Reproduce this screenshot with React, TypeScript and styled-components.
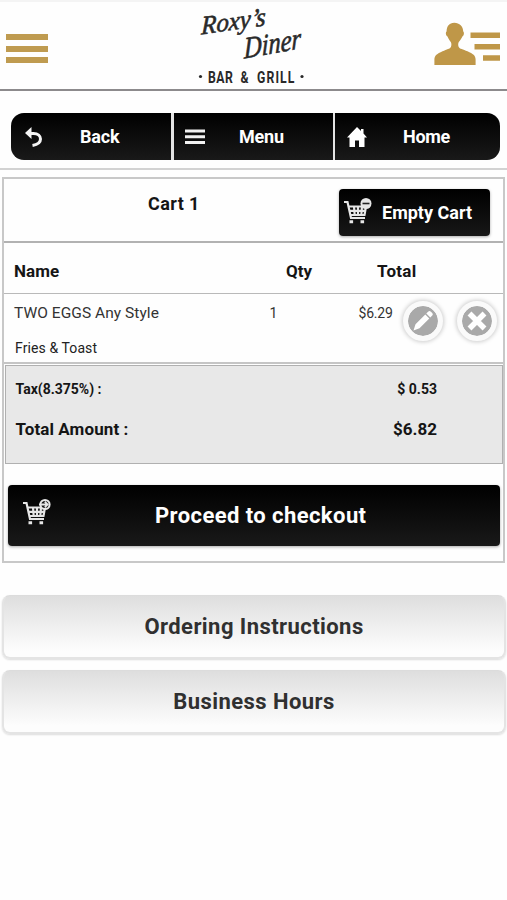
import React from "react";
import styled, { createGlobalStyle } from "styled-components";

const Global = createGlobalStyle`
  *, *::before, *::after { box-sizing: border-box; }
  html, body { margin: 0; background: #fefefe; }
  body { font-family: Roboto, "Liberation Sans", sans-serif; color: #151515; }
  button { font: inherit; color: inherit; border: 0; padding: 0; margin: 0; background: none; cursor: pointer; text-align: left; }
  svg { display: block; flex: none; overflow: visible; }
`;

const Page = styled.div`
  width: 507px;
  height: 900px;
  overflow: hidden;
  background: #fefefe;
`;

const Header = styled.header`
  height: 91px;
  display: flex;
  border-top: 2px solid #f4f4f4;
  border-bottom: 2px solid #8c8a8c;
  padding: 0 7px 0 6px;
`;

const MenuButton = styled.button`
  width: 42px;
  height: 29px;
  margin-top: 32px;
  display: flex;
  flex-direction: column;
  justify-content: space-between;
`;

const Bar = styled.span`
  height: 6px;
  background: #bf9b50;
`;

const LogoBox = styled.div`
  width: 112px;
  margin: 0 auto 0 149px;
`;

const AccountButton = styled.button`
  width: 66px;
  margin-top: 20px;
  height: 44px;
`;

const Nav = styled.nav`
  display: grid;
  grid-template-columns: 160px 159px 165px;
  gap: 2.5px;
  height: 47px;
  margin: 22px 7px 0 11px;
  border-radius: 13px;
  overflow: hidden;
  background: #e4e4e4;
  width: 489px;
`;

const NavItem = styled.button<{ $icon: number; $gap: number }>`
  display: flex;
  align-items: center;
  padding-left: ${(p) => p.$icon}px;
  gap: ${(p) => p.$gap}px;
  background: linear-gradient(#000, #0a0a0a 40%, #191919);
  color: #fff;
`;

const Text = styled.span<{ $size: number; $weight?: number; $track?: number; $color?: string }>`
  display: block;
  white-space: nowrap;
  font-size: ${(p) => p.$size}px;
  line-height: 24px;
  font-weight: ${(p) => p.$weight ?? 700};
  letter-spacing: ${(p) => p.$track ?? 0}px;
  color: ${(p) => p.$color ?? "inherit"};
`;

const Divider = styled.hr`
  border: 0;
  height: 2px;
  margin: 8px 0 7px;
  background: #d2d2d2;
`;

const Cart = styled.section`
  width: 503px;
  height: 386px;
  margin-left: 2px;
  border: 2px solid #c8c8c8;
`;

const CartHeader = styled.div`
  display: flex;
  height: 64px;
  border-bottom: 2px solid #b2b2b2;
  padding: 12px 0 0 144px;
`;

const CartTitle = styled.div`
  width: 191px;
  padding-top: 1px;
`;

const EmptyCart = styled.button`
  display: flex;
  align-items: center;
  width: 151px;
  height: 47px;
  margin-top: -2px;
  padding-left: 5px;
  gap: 10px;
  border-radius: 4px;
  background: linear-gradient(#000, #171717);
  box-shadow: 0 1px 3px #aaa;
  color: #fff;

  svg { margin-top: -3px; }
`;

const HeadRow = styled.div`
  display: grid;
  grid-template-columns: 272px 91px 1fr;
  height: 51px;
  padding: 16px 0 0 10px;
  border-bottom: 1px solid #b9b9b9;
`;

const ItemRow = styled.div`
  display: grid;
  grid-template-columns: 255.5px 89px 41px 54px 1fr;
  height: 70px;
  padding: 7px 0 0 10px;
  border-bottom: 2px solid #c5c5c5;
`;

const ItemName = styled.div`
  display: grid;
  gap: 11px;
  align-content: start;
`;

const ItemOption = styled.div`
  padding-left: 1px;
`;

const RoundButton = styled.button`
  display: grid;
  place-items: center;
  width: 40px;
  height: 40px;
  margin: 0 0 0 3.5px;
  border-radius: 50%;
  background: #a9a9a9;
  background-clip: padding-box;
  border: 5px solid #fafafa;
  box-shadow: 0 0 4px 1px #ccc;
`;

const Totals = styled.div`
  height: 99px;
  margin: 1px 0 0 1px;
  width: 498px;
  padding: 11px 65px 0 9.5px;
  background: #e8e8e8;
  border: 1px solid #b0b0b0;
  display: grid;
  align-content: start;
  gap: 16px;
`;

const TotalLine = styled.div`
  display: flex;
  justify-content: space-between;
`;

const Checkout = styled.button`
  display: flex;
  align-items: center;
  width: 492px;
  height: 61px;
  margin: 21px 0 0 4px;
  padding: 0 0 0 15px;
  gap: 104px;
  border-radius: 4px;
  background: linear-gradient(#000, #191919);
  box-shadow: 0 1px 3px #aaa;
  color: #fff;

  svg { margin-top: -8px; }
`;

const Panels = styled.div`
  display: grid;
  gap: 11px;
  margin: 32px 1px 0 2px;
`;

const PanelButton = styled.button`
  display: flex;
  justify-content: center;
  align-items: center;
  height: 64px;
  border: 2px solid #e4e4e4;
  border-top: 1px solid #dcdcdc;
  border-radius: 8px;
  background: linear-gradient(#dedede, #fdfdfd 90%);
  box-shadow: 0 1px 2px #dcdcdc;
`;

const Logo = () => (
  <svg width="112" height="86" viewBox="197 2 112 86" fill="#292929">
    <g fontFamily="Liberation Serif, serif" fontStyle="italic" fontWeight="400" stroke="#292929" strokeWidth=".6">
      <text transform="translate(201 34.5) rotate(-8) skewX(-10)" fontSize="26" textLength="65" lengthAdjust="spacingAndGlyphs">Roxy’s</text>
      <text transform="translate(244 58.5) rotate(-10) skewX(-10)" fontSize="30" textLength="58" lengthAdjust="spacingAndGlyphs">Diner</text>
    </g>
    <g fontFamily="Roboto, sans-serif" fontWeight="700" fontSize="17">
      <text transform="translate(208 82.5) scale(.72 1)" textLength="34.5">BAR</text>
      <text transform="translate(240.5 82.5) scale(.72 1)">&amp;</text>
      <text transform="translate(257 82.5) scale(.72 1)" textLength="52">GRILL</text>
    </g>
    <circle cx="200.5" cy="76.5" r="1.6" />
    <circle cx="302" cy="76.5" r="1.6" />
  </svg>
);

const AccountIcon = () => (
  <svg width="66" height="44" viewBox="434 22 66 44" fill="#bf9748">
    <path d="M454.3 22.8c5.200 0 8.900 3.600 8.900 8.800 1.200.6.9 4.300-.8 5-1.200 2.500-2.600 4.200-3.600 5.500-.7 1.100-.8 3.200-.2 4.600 1 2.300 4.500 2.500 8.900 4.600 5.500 2.500 8.100 4.300 8.100 8.300v5.400h-41.200v-5.400c0-4 2.700-5.800 8.100-8.300 4.400-2.100 7.500-2.300 8.500-4.600.6-1.400.5-3.500-.2-4.600-1-1.300-2.200-3-3.300-5.500-1.700-.7-2.200-4.400-.9-5 0-5.200 2.500-8.800 7.700-8.800z" />
    <path d="M470.500 32.500h29.500v5.500h-29.500zM474.500 44h25.500v5.500h-25.500zM483 55.200h17v5.500h-17z" />
  </svg>
);

const BackIcon = () => (
  <svg width="18" height="20" viewBox="0 0 18 20">
    <path d="M4 6.500h4.500c4.500 0 7 2.300 7 5.500s-2.500 5.500-8 6.500" fill="none" stroke="#f4f4f4" strokeWidth="3" />
    <path d="M0 6 6.500 0v12z" fill="#f4f4f4" />
  </svg>
);

const BarsIcon = () => (
  <svg width="20" height="16" viewBox="0 0 20 16" fill="#f1f1f1">
    <path d="M0 .5h20v3H0zM0 6.300h20v3H0zM0 12h20v3H0z" />
  </svg>
);

const HomeIcon = () => (
  <svg width="20" height="20" viewBox="0 0 20 20" fill="#fff">
    <path d="M10 0l4 4V2h2.500v4.500l3.500 4h-2.500V20H12v-6.500H8V20H2.500v-9.500H0z" />
  </svg>
);

const CartIcon = ({ mark }: { mark: "minus" | "arrow" }) => (
  <svg width="28" height="26" viewBox="0 0 28 26" fill="none" stroke="#e6e6e6">
    <path d="M0 4h3.500L7 20h14" strokeWidth="2.200" />
    <path d="M4.500 8.500h17.500l-1.500 8.500H6.500M5.500 12.800h15.500M10 8.500l.7 8.500M14 8.500v8.500M18 8.500l-.7 8.500" strokeWidth="2.200" />
    <path d="M5.500 22.200h3.600v3H5.500zM16.500 22.200h3.600v3h-3.600z" fill="#e6e6e6" stroke="none" />
    {mark === "minus" ? (
      <g>
        <circle cx="22" cy="5.500" r="5.500" fill="#e6e6e6" stroke="none" />
        <path d="M18.500 5.500h7" stroke="#222" strokeWidth="1.600" />
      </g>
    ) : (
      <g>
        <circle cx="22" cy="5.500" r="4.600" fill="#161616" strokeWidth="2" />
        <path d="M16 5.500h8M21.800 2.700l2.800 2.800-2.800 2.800" strokeWidth="1.800" />
      </g>
    )}
  </svg>
);

const PencilIcon = () => (
  <svg width="22" height="22" viewBox="0 0 22 22" fill="#fff">
    <path d="M1.500 20.500l2-6.300L13.300 4.500l4 4-9.800 9.800zM14.300 3.500l1.800-1.800c1-1 2-.8 2.800 0l1.300 1.300c.8.8.8 1.800 0 2.600l-1.900 1.900z" />
  </svg>
);

const CrossIcon = () => (
  <svg width="20" height="20" viewBox="0 0 20 20" stroke="#fff" strokeWidth="5.500">
    <path d="M2.500 2.500l15 15M17.500 2.500l-15 15" />
  </svg>
);

export default function App() {
  return (
    <Page>
      <Global />
      <Header>
        <MenuButton aria-label="Open menu">
          <Bar />
          <Bar />
          <Bar />
        </MenuButton>
        <LogoBox>
          <Logo />
        </LogoBox>
        <AccountButton aria-label="Account">
          <AccountIcon />
        </AccountButton>
      </Header>
      <Nav>
        <NavItem $icon={14} $gap={37}>
          <BackIcon />
          <Text $size={18} $track={-0.2}>Back</Text>
        </NavItem>
        <NavItem $icon={11} $gap={34.5}>
          <BarsIcon />
          <Text $size={18} $track={-0.2}>Menu</Text>
        </NavItem>
        <NavItem $icon={12} $gap={36}>
          <HomeIcon />
          <Text $size={18} $track={-0.3}>Home</Text>
        </NavItem>
      </Nav>
      <Divider />
      <Cart>
        <CartHeader>
          <CartTitle>
            <Text $size={18} $track={0.4}>Cart 1</Text>
          </CartTitle>
          <EmptyCart>
            <CartIcon mark="minus" />
            <Text $size={18}>Empty Cart</Text>
          </EmptyCart>
        </CartHeader>
        <HeadRow>
          <Text $size={17} $track={0.1}>Name</Text>
          <Text $size={17}>Qty</Text>
          <Text $size={17} $track={0.3}>Total</Text>
        </HeadRow>
        <ItemRow>
          <ItemName>
            <Text $size={15.5} $weight={400} $track={0.05} $color="#333">TWO EGGS Any Style</Text>
            <ItemOption>
              <Text $size={14} $weight={400} $track={0.1} $color="#222">Fries &amp; Toast</Text>
            </ItemOption>
          </ItemName>
          <Text $size={14} $weight={400} $color="#333">1</Text>
          <Text $size={14} $weight={400} $track={-0.2} $color="#333">$6.29</Text>
          <RoundButton aria-label="Edit item">
            <PencilIcon />
          </RoundButton>
          <RoundButton aria-label="Remove item">
            <CrossIcon />
          </RoundButton>
        </ItemRow>
        <Totals>
          <TotalLine>
            <Text $size={14}>Tax(8.375%) :</Text>
            <Text $size={14}>$ 0.53</Text>
          </TotalLine>
          <TotalLine>
            <Text $size={17} $track={0.1}>Total Amount :</Text>
            <Text $size={17}>$6.82</Text>
          </TotalLine>
        </Totals>
        <Checkout>
          <CartIcon mark="arrow" />
          <Text $size={22} $track={0.42}>Proceed to checkout</Text>
        </Checkout>
      </Cart>
      <Panels>
        <PanelButton>
          <Text $size={22} $track={0.43} $color="#303030">Ordering Instructions</Text>
        </PanelButton>
        <PanelButton>
          <Text $size={22} $track={0.43} $color="#303030">Business Hours</Text>
        </PanelButton>
      </Panels>
    </Page>
  );
}
